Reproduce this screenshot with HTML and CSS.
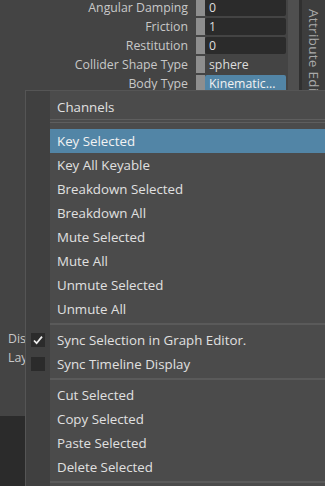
FILE: index.html
```html
<!DOCTYPE html>
<html lang="en">
<head>
  <meta charset="UTF-8">
  <meta name="viewport" content="width=device-width, initial-scale=1.0">
  <title>Channel Box Menu</title>
  <link rel="stylesheet" href="styles.css">
</head>
<body>
  <div class="editor">
    <div class="editor-main">
      <div class="attrs">
        <div class="attr-row">
          <span class="attr-label">Angular Damping</span>
          <span class="attr-key"></span>
          <span class="attr-field">0</span>
        </div>
        <div class="attr-row">
          <span class="attr-label">Friction</span>
          <span class="attr-key"></span>
          <span class="attr-field">1</span>
        </div>
        <div class="attr-row">
          <span class="attr-label">Restitution</span>
          <span class="attr-key"></span>
          <span class="attr-field">0</span>
        </div>
        <div class="attr-row">
          <span class="attr-label">Collider Shape Type</span>
          <span class="attr-key"></span>
          <span class="attr-field attr-field-plain">sphere</span>
        </div>
        <div class="attr-row">
          <span class="attr-label">Body Type</span>
          <span class="attr-key"></span>
          <span class="attr-field attr-field-active">Kinematic...</span>
        </div>
      </div>
      <div class="lower">
        <div class="lower-label">Display</div>
        <div class="lower-label">Layer</div>
      </div>
      <div class="dark-area"></div>
    </div>
    <div class="scroll-strip"></div>
    <div class="tab-divider"></div>
    <div class="side-tab"><span class="side-tab-text">Attribute Editor</span></div>
  </div>

  <div class="menu">
    <div class="menu-header">Channels</div>
    <div class="menu-sep-double"></div>
    <div class="menu-item"><span class="menu-icon"></span><span class="menu-label is-active">Key Selected</span></div>
    <div class="menu-item"><span class="menu-icon"></span><span class="menu-label">Key All Keyable</span></div>
    <div class="menu-item"><span class="menu-icon"></span><span class="menu-label">Breakdown Selected</span></div>
    <div class="menu-item"><span class="menu-icon"></span><span class="menu-label">Breakdown All</span></div>
    <div class="menu-item"><span class="menu-icon"></span><span class="menu-label">Mute Selected</span></div>
    <div class="menu-item"><span class="menu-icon"></span><span class="menu-label">Mute All</span></div>
    <div class="menu-item"><span class="menu-icon"></span><span class="menu-label">Unmute Selected</span></div>
    <div class="menu-item"><span class="menu-icon"></span><span class="menu-label">Unmute All</span></div>
    <div class="menu-sep"></div>
    <div class="menu-item">
      <span class="menu-icon"><span class="check-box">
        <svg width="14" height="14" viewBox="0 0 14 14"><path d="M3 7.5 L5.6 10.2 L11 3.6" fill="none" stroke="#eeeeee" stroke-width="1.8"/></svg>
      </span></span>
      <span class="menu-label">Sync Selection in Graph Editor.</span>
    </div>
    <div class="menu-item">
      <span class="menu-icon"><span class="check-box"></span></span>
      <span class="menu-label">Sync Timeline Display</span>
    </div>
    <div class="menu-sep"></div>
    <div class="menu-item"><span class="menu-icon"></span><span class="menu-label">Cut Selected</span></div>
    <div class="menu-item"><span class="menu-icon"></span><span class="menu-label">Copy Selected</span></div>
    <div class="menu-item"><span class="menu-icon"></span><span class="menu-label">Paste Selected</span></div>
    <div class="menu-item"><span class="menu-icon"></span><span class="menu-label">Delete Selected</span></div>
    <div class="menu-sep"></div>
  </div>
</body>
</html>
```

FILE: styles.css
```css
html, body {
  margin: 0;
  padding: 0;
  height: 100%;
  overflow: hidden;
}
body {
  position: relative;
  background: #444444;
  color: #c8c8c8;
  font-family: "Open Sans", "Noto Sans", sans-serif;
  font-size: 12.3px;
}
.editor {
  display: flex;
  height: 486px;
}
.editor-main {
  flex: 1;
  display: flex;
  flex-direction: column;
  min-width: 0;
}
.attrs {
  display: flex;
  flex-direction: column;
  gap: 2px;
  margin-top: -1px;
}
.attr-row {
  display: flex;
  align-items: stretch;
  height: 17px;
}
.attr-label {
  width: 188px;
  text-align: right;
  line-height: 17px;
  white-space: nowrap;
}
.attr-key {
  width: 9px;
  margin-left: 8px;
  background: #8e8e8e;
}
.attr-field {
  width: 81px;
  padding-left: 4px;
  box-sizing: border-box;
  line-height: 17px;
  background: #2b2b2b;
  border-radius: 2px;
  color: #dddddd;
}
.attr-field-plain {
  background: transparent;
}
.attr-field-active {
  background: #5285a6;
  color: #f2f2f2;
}
.lower {
  margin-top: 238px;
  padding-left: 8px;
  height: 86px;
  display: flex;
  flex-direction: column;
  gap: 2px;
}
.lower-label {
  line-height: 17px;
}
.dark-area {
  flex: 1;
  background: #2b2b2b;
}
.scroll-strip {
  width: 11px;
  margin-left: 2px;
  background: #4f4f4f;
}
.tab-divider {
  width: 3px;
  background: #303030;
}
.side-tab {
  width: 23px;
  background: #3d3d3d;
  display: flex;
  justify-content: center;
  padding-top: 9px;
  box-sizing: border-box;
}
.side-tab-text {
  writing-mode: vertical-rl;
  color: #a9a9a9;
  font-size: 13.5px;
  letter-spacing: 0.3px;
  white-space: nowrap;
}

/* popup menu */
.menu {
  position: absolute;
  left: 25px;
  top: 90px;
  right: 0;
  bottom: 0;
  padding-top: 4px;
  border-top: 1px solid #555555;
  border-left: 1px solid #555555;
  background: linear-gradient(to right, #404040 24px, #4b4b4b 24px);
  color: #e0e0e0;
  font-size: 13.3px;
}
.menu-header {
  height: 24px;
  line-height: 24px;
  padding-left: 31px;
}
.menu-sep-double {
  margin: 0 0 6px 24px;
  height: 2px;
  border-top: 1px solid #5e5e5e;
  border-bottom: 1px solid #5e5e5e;
}
.menu-sep {
  margin: 2px 0 3px 24px;
  height: 2px;
  background: #5a5a5a;
}
.menu-item {
  display: flex;
  height: 24px;
}
.menu-icon {
  width: 24px;
  display: flex;
  align-items: center;
  justify-content: center;
}
.menu-label {
  flex: 1;
  padding-left: 7px;
  line-height: 24px;
  white-space: nowrap;
}
.menu-label.is-active {
  background: #5285a6;
  color: #f2f2f2;
}
.check-box {
  width: 14px;
  height: 14px;
  background: #2b2b2b;
  display: block;
}
.check-box svg {
  display: block;
}
```
